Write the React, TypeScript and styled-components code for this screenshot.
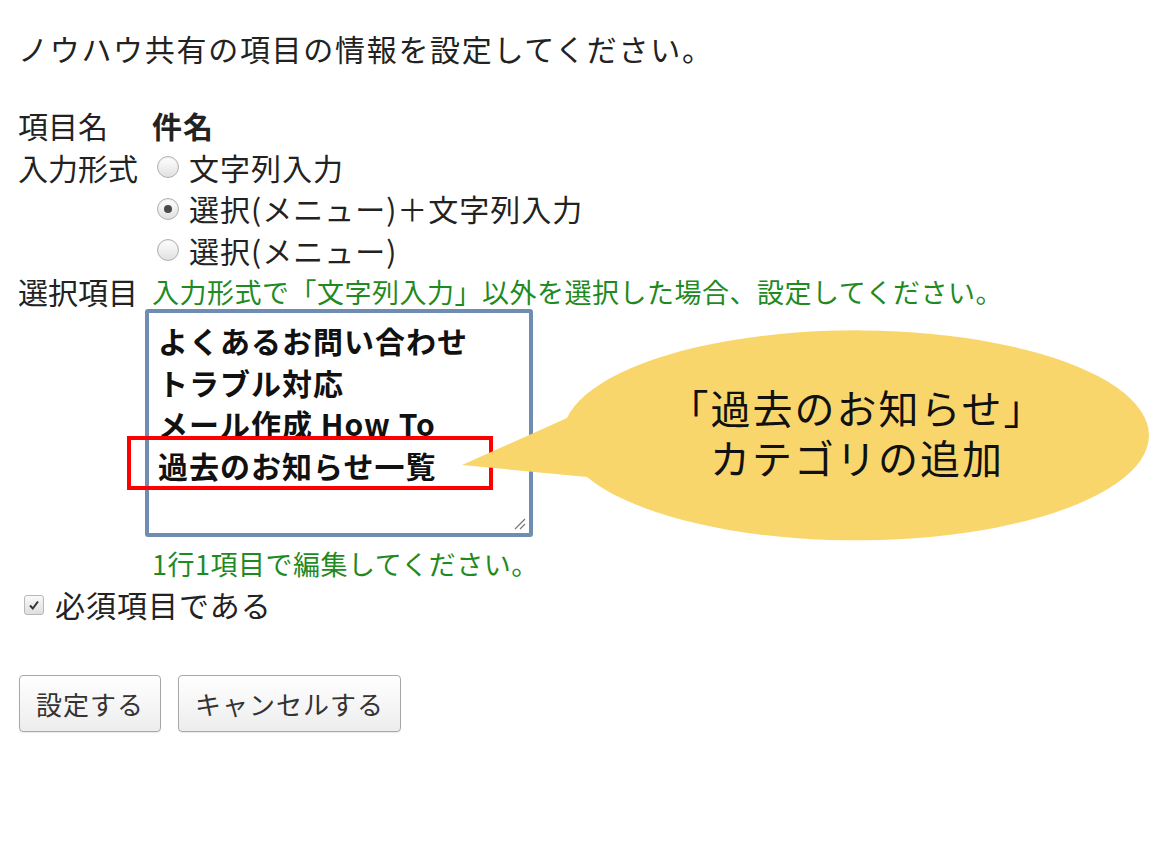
import React from 'react'
import styled, { createGlobalStyle } from 'styled-components'

const GlobalStyle = createGlobalStyle`
    html, body {
        margin: 0;
        padding: 0;
        background: #ffffff;
    }

    body {
        font-family: 'Noto Sans CJK JP', 'Noto Sans', sans-serif;
        color: #222222;
    }
`

const Page = styled.div`
    position: relative;
    width: 1149px;
    height: 841px;
    padding: 28px 0 0 18px;
    box-sizing: border-box;
    overflow: hidden;
`

const Title = styled.p`
    margin: 0;
    font-size: 30px;
    line-height: 41px;
    letter-spacing: 1.7px;
`

const Form = styled.div`
    margin-top: 36px;
    display: grid;
    grid-template-columns: 134px 1fr;
    font-size: 30px;
    line-height: 41.5px;
    letter-spacing: 1px;
`

const Label = styled.div`
    white-space: nowrap;
    letter-spacing: 0;
`

const Value = styled.div<{ $bold?: boolean }>`
    font-weight: ${(p) => (p.$bold ? 700 : 400)};
`

const Options = styled.div`
    display: flex;
    flex-direction: column;
`

const Option = styled.label`
    display: flex;
    align-items: center;
    gap: 10px;
    margin-left: 5px;
    white-space: nowrap;
`

const RadioInput = styled.input.attrs({ type: 'radio' })`
    appearance: none;
    flex-shrink: 0;
    margin: 0;
    width: 22px;
    height: 22px;
    border-radius: 50%;
    border: 1px solid #b0b0b0;
    background: linear-gradient(#ffffff, #e0e0e0);
    box-shadow: inset 0 1px 1px rgba(0, 0, 0, 0.08);
    position: relative;
    box-sizing: border-box;

    &:checked::after {
        content: '';
        position: absolute;
        left: 6px;
        top: 6px;
        width: 8px;
        height: 8px;
        border-radius: 50%;
        background: #4a4a4a;
    }
`

const Hint = styled.div<{ $top?: number }>`
    color: #1f8a1f;
    font-size: 27px;
    line-height: 41px;
    letter-spacing: 0.5px;
    white-space: nowrap;
    margin-top: ${(p) => p.$top ?? 0}px;
`

const AreaBox = styled.div`
    margin-left: -7px;
    margin-top: -3px;
    width: 371px;
    height: 213px;
    border: 4px solid #6f8db1;
    border-radius: 3px;
    background: #ffffff;
    position: relative;
    padding: 7px 0 0 9px;
    box-sizing: content-box;
`

const AreaLine = styled.div`
    font-weight: 700;
    font-size: 30px;
    line-height: 41.5px;
    letter-spacing: 1px;
    color: #111111;
    white-space: nowrap;
`

const Grip = styled.svg`
    position: absolute;
    right: 3px;
    bottom: 3px;
`

const CheckRow = styled.label`
    display: flex;
    align-items: center;
    gap: 11px;
    padding-left: 6px;
    font-size: 30px;
    line-height: 41px;
    letter-spacing: 1px;
`

const CheckBox = styled.span`
    width: 18px;
    height: 18px;
    border: 1px solid #b8b8b8;
    border-radius: 3px;
    background: linear-gradient(#fafafa, #dedede);
    display: flex;
    align-items: center;
    justify-content: center;
`

const Buttons = styled.div`
    display: flex;
    gap: 17px;
    margin-top: 50px;
    margin-left: 1px;
`

const Button = styled.button`
    height: 57px;
    padding: 0 16px;
    font-family: 'Noto Sans CJK JP', sans-serif;
    font-size: 26px;
    letter-spacing: 1px;
    color: #333333;
    border: 1.5px solid #a8a8a8;
    border-radius: 4px;
    background: linear-gradient(#ffffff, #ededed);
    box-shadow: 0 1px 1px rgba(0, 0, 0, 0.08);
`

const Highlight = styled.div`
    position: absolute;
    left: 127px;
    top: 436px;
    width: 358px;
    height: 46px;
    border: 4px solid #ff0000;
`

const Callout = styled.div`
    position: absolute;
    left: 455px;
    top: 330px;
    width: 694px;
    height: 216px;
`

const CalloutText = styled.div`
    position: absolute;
    left: 110px;
    right: 0;
    top: 57px;
    display: flex;
    flex-direction: column;
    align-items: center;
    gap: 10px;
    font-size: 40px;
    line-height: 40px;
    font-weight: 400;
    color: #111111;
    letter-spacing: 2px;
`

const CalloutLine = styled.div`
    white-space: nowrap;
`

const App = () => {
    const modes = ['文字列入力', '選択(メニュー)＋文字列入力', '選択(メニュー)']

    return (
        <Page>
            <GlobalStyle />
            <Title>ノウハウ共有の項目の情報を設定してください。</Title>
            <Form>
                <Label>項目名</Label>
                <Value $bold>件名</Value>

                <Label>入力形式</Label>
                <Options>
                    {modes.map((mode, index) => (
                        <Option key={index}>
                            <RadioInput name='mode' defaultChecked={index === 1} />
                            {mode}
                        </Option>
                    ))}
                </Options>

                <Label>選択項目</Label>
                <div>
                    <Hint>入力形式で「文字列入力」以外を選択した場合、設定してください。</Hint>
                    <AreaBox>
                        <AreaLine>よくあるお問い合わせ</AreaLine>
                        <AreaLine>トラブル対応</AreaLine>
                        <AreaLine>メール作成 How To</AreaLine>
                        <AreaLine>過去のお知らせ一覧</AreaLine>
                        <Grip width='14' height='14' viewBox='0 0 14 14'>
                            <path d='M13 3 L3 13 M13 8 L8 13' stroke='#777' strokeWidth='1.2' />
                        </Grip>
                    </AreaBox>
                    <Hint $top={6}>1行1項目で編集してください。</Hint>
                </div>
            </Form>

            <CheckRow>
                <CheckBox>
                    <svg width='12' height='12' viewBox='0 0 12 12'>
                        <path d='M2 6.5 L4.8 9.5 L10 2.5' stroke='#333' strokeWidth='2' fill='none' />
                    </svg>
                </CheckBox>
                必須項目である
            </CheckRow>

            <Buttons>
                <Button type='button'>設定する</Button>
                <Button type='button'>キャンセルする</Button>
            </Buttons>

            <Highlight />

            <Callout>
                <svg width='694' height='216' viewBox='0 0 694 216'>
                    <path
                        d='M112 88 A293 105 0 1 1 132 147 L7 135 Z'
                        fill='#f9d66c'
                    />
                </svg>
                <CalloutText>
                    <CalloutLine>「過去のお知らせ」</CalloutLine>
                    <CalloutLine>カテゴリの追加</CalloutLine>
                </CalloutText>
            </Callout>
        </Page>
    )
}

export default App
